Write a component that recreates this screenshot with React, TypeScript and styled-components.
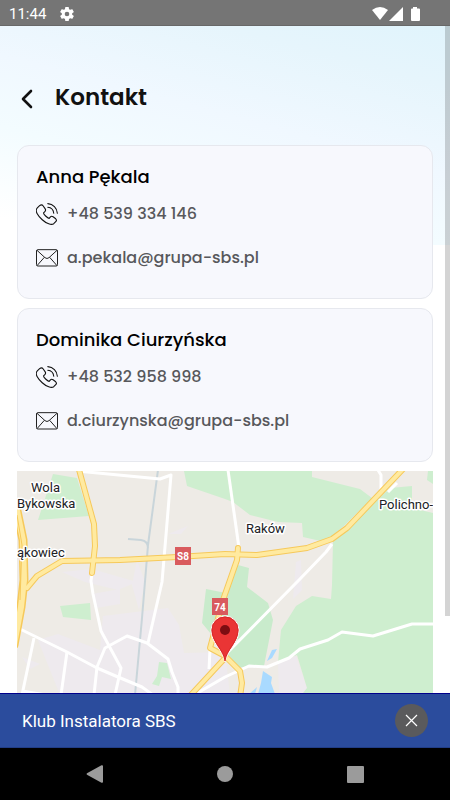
import React from "react";
import styled, { createGlobalStyle } from "styled-components";

const brandFont = `Poppins, Inter, "Open Sans", sans-serif`;
const systemFont = `Roboto, "Noto Sans", sans-serif`;

const GlobalStyle = createGlobalStyle`
  *, *::before, *::after { box-sizing: border-box; }
  body { margin: 0; background: #fff; }
  button { border: 0; padding: 0; background: none; color: inherit; font: inherit; cursor: pointer; }
  h1, h2, p { margin: 0; }
  svg { display: block; }
`;

const Screen = styled.div`
  display: flex;
  flex-direction: column;
  height: 100vh;
  overflow: hidden;
  background: #fff;
  font-family: ${brandFont};
`;

const StatusBar = styled.header`
  display: flex;
  align-items: center;
  flex: none;
  height: 26px;
  padding: 2px 30px 0 9px;
  background: #757575;
  border-bottom: 1px solid #686868;
  color: #fff;
  font: 400 15px/24px ${systemFont};
`;

const StatusTime = styled.span`
  margin-right: 13px;
`;

const StatusIcons = styled.div`
  display: flex;
  align-items: center;
  margin-left: auto;
`;

const Viewport = styled.div`
  position: relative;
  flex: 1;
  min-height: 0;
  display: flex;
  flex-direction: column;
  overflow: hidden;
`;

const Content = styled.main`
  flex: 1;
  min-height: 0;
  display: flex;
  flex-direction: column;
  gap: 9px;
  padding: 0 17px;
  background: linear-gradient(195deg, #e0f4fc 0%, #e6f5fc 18%, #f0f8ff 44%, #f3fcff 65%, #ffffff 92%) no-repeat;
  background-size: 100% 219px;
`;

const ScrollThumb = styled.div`
  position: absolute;
  top: 0;
  right: 0;
  width: 5px;
  height: 590px;
  background: rgba(0, 0, 0, 0.17);
`;

const TitleRow = styled.div`
  display: flex;
  align-items: center;
  flex: none;
  gap: 18px;
  height: 110px;
  padding-top: 32px;
`;

const BackButton = styled.button`
  display: grid;
  place-items: center;
  width: 20px;
  height: 28px;
  padding-top: 4px;
`;

const Title = styled.h1`
  color: #111;
  font-size: 23px;
  line-height: 36px;
  font-weight: 600;
`;

const Card = styled.section`
  flex: none;
  height: 154px;
  padding: 17px 18px;
  border: 1px solid #e6e8ee;
  border-radius: 12px;
  background: #f7f8fd;
`;

const PersonName = styled.h2`
  margin-bottom: 11px;
  color: #000;
  font-size: 18px;
  line-height: 28px;
  font-weight: 500;
`;

const ContactLink = styled.a`
  display: flex;
  align-items: center;
  gap: 9px;
  height: 24px;
  margin-bottom: 20px;
  color: #58585c;
  font-size: 16px;
  line-height: 24px;
  font-weight: 500;
  text-decoration: none;
`;

const MapFrame = styled.section`
  flex: 1;
  min-height: 0;
  overflow: hidden;
  background: #eeebe6;
`;

const MapDrawing = styled.svg`
  width: 100%;
  height: 100%;
`;

const MapLabel = styled.text`
  fill: #202124;
  stroke: #fff;
  stroke-width: 3px;
  stroke-linejoin: round;
  paint-order: stroke;
  font: 400 13px ${systemFont};
`;

const RoadNumber = styled.text`
  fill: #fff;
  font: 700 10px ${systemFont};
  text-anchor: middle;
`;

const ClubBar = styled.aside`
  display: flex;
  align-items: center;
  justify-content: space-between;
  flex: none;
  height: 55px;
  padding: 0 22px;
  border-top: 1px solid #00008b;
  border-bottom: 1px solid #213d86;
  background: #2b4c9d;
  color: #fff;
  font: 400 17px/24px ${systemFont};
`;

const CloseButton = styled.button`
  display: grid;
  place-items: center;
  width: 33px;
  height: 33px;
  border-radius: 50%;
  background: #5a5a5c;
`;

const NavBar = styled.nav`
  display: flex;
  align-items: center;
  justify-content: center;
  flex: none;
  gap: 106px;
  height: 52px;
  background: #000;
`;

const NavButton = styled.button`
  display: grid;
  place-items: center;
  width: 24px;
  height: 24px;
`;

const PhoneIcon = () => (
  <svg width="22" height="22" viewBox="0 0 67 67" fill="none" stroke="#111" strokeWidth="3.3" strokeLinecap="round" strokeLinejoin="round" aria-hidden="true">
    <path d="M11 8c4-3 8-3 11 1l6 9c2 3 1 6-1 8l-4 4c-1 4 12 16 17 17l4-5c2-2 5-2 8 0l8 6c3 3 3 6 0 9l-6 6c-7 5-22 0-35-12S-5 24 4 15z" />
    <path d="M36 2c16 1 28 13 29 29M36 13c10 1 17 8 18 18" />
  </svg>
);

const MailIcon = () => (
  <svg width="22" height="18" viewBox="0 0 66 54" fill="none" stroke="#222" strokeWidth="3" strokeLinejoin="round" aria-hidden="true">
    <rect x="1.5" y="2" width="63" height="49" rx="4" />
    <path d="M3 4l24 22q6 5 12 0L63 4M3 50l22-25M63 50L41 25" />
  </svg>
);

const people = [
  { name: "Anna Pękala", phone: "+48 539 334 146", mail: "a.pekala@grupa-sbs.pl" },
  { name: "Dominika Ciurzyńska", phone: "+48 532 958 998", mail: "d.ciurzynska@grupa-sbs.pl" },
];

const localRoads = [
  "M77 471L160 479L171 475L166 535L162 582L148 643",
  "M92 573L91 581L93 594L101 631L121 668L115 695",
  "M18 628L67 652L97 668L118 677L142 687L153 695",
  "M34 638L22 695M67 652L61 695M22 691L46 695",
  "M94 695L97 667L105 648L127 636L147 643L168 659L172 672L178 687L178 695",
  "M210 650L209 669M194 695L225 677L249 666L267 667L289 658L300 649L328 640L342 632L373 636L412 624L434 624",
  "M228 470L239 548",
  "M378 470L381 475L381 490M397 483L388 492",
  "M332 544L326 552L299 580L226 654",
];

const mainRoads = [
  "M78 466L94 524L95 546L92 573",
  "M27 588L37 576L62 561L120 560L177 557L225 554L257 555L307 548L332 539L347 528L404 468",
  "M238 548L237 560L223 600L210 648L225 656",
  "M189 697L226 657L240 671L242 683L240 697",
];

const expressway = "M16 506L23 540L24 580L21 607L14 645";

const LocationMap = () => (
  <MapDrawing viewBox="17 471 416 222" preserveAspectRatio="xMidYMin slice" role="img" aria-label="Mapa dojazdu">
    <path fill="#eeeaee" d="M62 572L92 569L137 582L118 590L85 582ZM137 560L145 582L139 610L132 585ZM168 534L188 526L181 534ZM92 594L120 589L120 604L96 608ZM103 616L168 608L179 625L184 653L225 652L230 695L60 695L38 640L58 634L100 650ZM278 664L296 656L307 688L303 695L279 695ZM22 657L40 664L30 669ZM296 562L301 560L302 590L293 599Z" />
    <path fill="#ceeecf" d="M53 474L77 478L89 516L38 520ZM184 471L187 486L225 499L233 502L250 515L278 522L302 523L303 537L325 542L345 525L372 498L360 489L312 477L312 471ZM60 606L90 603L91 620L63 617ZM159 662L167 663L171 679L162 677L159 686L152 684L157 676ZM428 471L427 480L433 484V471Z" />
    <path fill="#ceeecf" d="M333 541L332 585L331 599L312 596L296 606L281 630L278 662L297 655L307 688L303 693H433V513L412 508L412 486L390 488Z" />
    <path fill="#c9ebcc" d="M238 565L249 568L247 587L268 603L273 620L264 666L249 666L238 668L225 650L211 634L202 623L206 589L226 593Z" />
    <path fill="#a9daff" d="M277 649L272 650L267 661L272 658ZM263 671L272 677L271 683L275 694H258L261 683ZM257 687L249 694H255Z" />
    <g fill="none" strokeLinejoin="round">
      <path d="M158 470L148 545L142 618L135 695M128 539L141 540Q148 541 148 548" stroke="#c9d5da" strokeWidth="2" />
      <g stroke="#fff" strokeWidth="3">
        {localRoads.map((d) => <path key={d} d={d} />)}
      </g>
      <g stroke="#f6c95b" strokeLinecap="round">
        <path d={expressway} strokeWidth="9" />
        {mainRoads.map((d) => <path key={d} d={d} strokeWidth="6" />)}
      </g>
      <g stroke="#ffeaa0" strokeLinecap="round">
        <path d={expressway} strokeWidth="6" />
        {mainRoads.map((d) => <path key={d} d={d} strokeWidth="4" />)}
      </g>
      <path d="M17 515L22 545L20 600" stroke="#f6c95b" />
    </g>
    <rect x="175" y="547" width="16" height="18" fill="#d95b5e" />
    <RoadNumber x="183" y="560">S8</RoadNumber>
    <rect x="212" y="598" width="16" height="17" fill="#d95b5e" />
    <RoadNumber x="220" y="611">74</RoadNumber>
    <MapLabel x="31" y="492">Wola</MapLabel>
    <MapLabel x="17" y="508">Bykowska</MapLabel>
    <MapLabel x="17" y="557">ąkowiec</MapLabel>
    <MapLabel x="246" y="533">Raków</MapLabel>
    <MapLabel x="379" y="509">Polichno-</MapLabel>
    <path d="M225 662C223 650 211 643 211 630A14 14 0 0 1 239 630C239 643 227 650 225 662Z" fill="#ea3535" stroke="#fff" strokeWidth="1" />
    <path d="M225 661C224 650 212 642 212 630A13 13 0 0 1 238 630C238 642 226 650 225 661Z" fill="none" stroke="#d92b2b" strokeWidth="1" />
    <circle cx="225" cy="630" r="5" fill="#7d0d12" />
  </MapDrawing>
);

export default function App() {
  return (
    <Screen>
      <GlobalStyle />
      <StatusBar>
        <StatusTime>11:44</StatusTime>
        <svg width="16" height="16" viewBox="1 1 22 22" fill="#fff" aria-hidden="true">
          <path d="M19.1 12.9a7 7 0 0 0 0-1.8l2-1.6a.5.5 0 0 0 .2-.6l-2-3.4a.5.5 0 0 0-.5-.2l-2.4 1a7 7 0 0 0-1.6-1l-.4-2.5a.5.5 0 0 0-.5-.4h-3.8a.5.5 0 0 0-.5.4l-.4 2.5a7 7 0 0 0-1.6 1l-2.4-1a.5.5 0 0 0-.5.2l-2 3.4a.5.5 0 0 0 .2.6l2 1.6a7 7 0 0 0 0 1.8l-2 1.6a.5.5 0 0 0-.2.6l2 3.4c.1.2.3.3.5.2l2.4-1a7 7 0 0 0 1.6 1l.4 2.5c0 .2.2.4.5.4h3.8c.3 0 .5-.2.5-.4l.4-2.5a7 7 0 0 0 1.6-1l2.4 1c.2.1.4 0 .5-.2l2-3.4a.5.5 0 0 0-.2-.6zM12 15.2a3.2 3.2 0 1 1 0-6.4 3.2 3.2 0 0 1 0 6.4z" />
        </svg>
        <StatusIcons>
          <svg width="48" height="16" viewBox="0 0 48 16" fill="#fff" aria-hidden="true">
            <path d="M0 4Q8-2 16 4L8 14Z" />
            <path d="M17 15L31 1V15Z" />
            <path d="M39 2.500h2V1h4v1.500h2q1 0 1 1V14q0 1-1 1h-7q-1 0-1-1V3.500q0-1 1-1z" />
          </svg>
        </StatusIcons>
      </StatusBar>

      <Viewport>
        <Content>
          <TitleRow>
            <BackButton aria-label="Wstecz">
              <svg width="14" height="20" viewBox="0 0 14 20" fill="none" stroke="#111" strokeWidth="2.600" strokeLinecap="round" strokeLinejoin="round" aria-hidden="true">
                <path d="M11 2L3 10l8 8" />
              </svg>
            </BackButton>
            <Title>Kontakt</Title>
          </TitleRow>
          {people.map((person) => (
            <Card key={person.mail}>
              <PersonName>{person.name}</PersonName>
              <ContactLink href={`tel:${person.phone.replace(/ /g, "")}`}>
                <PhoneIcon />
                {person.phone}
              </ContactLink>
              <ContactLink href={`mailto:${person.mail}`}>
                <MailIcon />
                {person.mail}
              </ContactLink>
            </Card>
          ))}
          <MapFrame>
            <LocationMap />
          </MapFrame>
        </Content>
        <ScrollThumb />
      </Viewport>

      <ClubBar>
        <p>Klub Instalatora SBS</p>
        <CloseButton aria-label="Zamknij">
          <svg width="13" height="13" viewBox="0 0 13 13" stroke="#fff" strokeWidth="1.200" aria-hidden="true">
            <path d="M1 1l11 11M12 1L1 12" />
          </svg>
        </CloseButton>
      </ClubBar>

      <NavBar>
        <NavButton aria-label="Cofnij">
          <svg width="18" height="18" viewBox="0 0 18 18" fill="#9b9b9b" aria-hidden="true">
            <path d="M1 8.200L15.500 0.300Q17 0 17 1V17q0 1-1.500 0.700L1 9.800Q0 9 1 8.200Z" />
          </svg>
        </NavButton>
        <NavButton aria-label="Ekran główny">
          <svg width="16" height="16" viewBox="0 0 16 16" fill="#9b9b9b" aria-hidden="true">
            <circle cx="8" cy="8" r="8" />
          </svg>
        </NavButton>
        <NavButton aria-label="Ostatnie aplikacje">
          <svg width="17" height="17" viewBox="0 0 17 17" fill="#9b9b9b" aria-hidden="true">
            <rect width="17" height="17" rx="1" />
          </svg>
        </NavButton>
      </NavBar>
    </Screen>
  );
}
